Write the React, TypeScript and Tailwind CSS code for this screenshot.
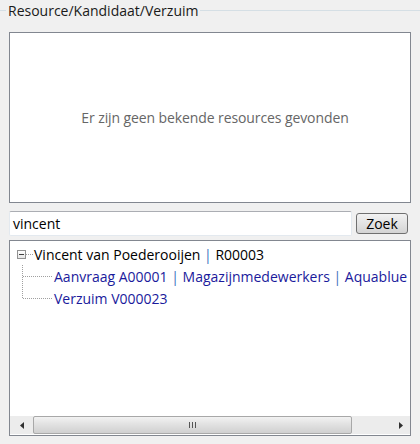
import React from 'react';

const font = { fontFamily: '"Open Sans", "Noto Sans", sans-serif' };

function Connector({ last }: { last?: boolean }) {
  // dotted tree lines drawn for each child row
  return (
    <svg width="44" height="22" className="shrink-0" shapeRendering="crispEdges">
      <line x1="12.5" y1="0" x2="12.5" y2={last ? 11.5 : 22} stroke="#a0a0a0" strokeDasharray="1 1" />
      <line x1="13" y1="11.5" x2="42" y2="11.5" stroke="#a0a0a0" strokeDasharray="1 1" />
    </svg>
  );
}

function Sep() {
  return <span className="text-[#3a70c0]"> | </span>;
}

export default function App() {
  return (
    <div className="w-[420px] h-[444px] bg-[#f0f0f0] flex flex-col px-[9px] overflow-hidden" style={font}>
      {/* group header */}
      <div className="-mx-[9px] h-[21px] flex items-center">
        <div className="w-[6px] h-px bg-[#d5dfe5]" />
        <span className="px-[2px] text-[14px] leading-none text-[#1a1a1a]">Resource/Kandidaat/Verzuim</span>
        <div className="flex-1 h-px bg-[#d5dfe5]" />
      </div>

      <div className="mt-[11px] h-[171px] border border-[#828790] bg-white flex items-center justify-center pl-[10px]">
        <span className="text-[14px] text-[#666] tracking-[-0.1px]">Er zijn geen bekende resources gevonden</span>
      </div>

      <div className="mt-[8px] flex items-center">
        <div className="w-[343px] h-[25px] bg-white border border-[#e3e9ef] border-t-[#abadb3] rounded-[2px] flex items-center px-[3px]">
          <span className="text-[14px] text-black">vincent</span>
        </div>
        <div className="ml-[4px] w-[52px] h-[21px] rounded-[3px] border border-[#707070] bg-gradient-to-b from-[#f2f2f2] to-[#d4d4d4] flex items-center justify-center">
          <span className="text-[14px] text-black leading-none">Zoek</span>
        </div>
      </div>

      <div className="mt-[4px] h-[196px] border border-[#828790] bg-white flex flex-col">
        <div className="flex-1 pt-[2px] text-[14px] whitespace-nowrap overflow-hidden">
          <div className="h-[22px] flex items-center pl-[7px]">
            <div className="w-[9px] h-[9px] border border-[#919191] bg-gradient-to-b from-white to-[#e6e6e6] flex items-center justify-center">
              <div className="w-[5px] h-px bg-[#404040]" />
            </div>
            <div className="w-[7px] border-t border-dotted border-[#a0a0a0]" />
            <span className="ml-[1px] text-black">
              Vincent van Poederooijen<Sep />R00003
            </span>
          </div>
          <div className="h-[22px] flex items-center">
            <Connector />
            <span className="text-[#1a1a9c]">
              Aanvraag A00001<Sep />Magazijnmedewerkers<Sep />Aquablue
            </span>
          </div>
          <div className="h-[22px] flex items-center">
            <Connector last />
            <span className="text-[#1a1a9c]">Verzuim V000023</span>
          </div>
        </div>

        {/* horizontal scrollbar */}
        <div className="h-[18px] mb-[1px] flex bg-[#ececec]">
          <div className="w-[23px] flex items-center justify-center">
            <svg width="4" height="7" viewBox="0 0 4 7"><path d="M4 0 L0 3.5 L4 7 Z" fill="#303030" /></svg>
          </div>
          <div className="w-[319px] rounded-[2px] border border-[#a8a8a8] bg-gradient-to-b from-[#f2f2f2] via-[#e0e0e0] to-[#d0d0d0] flex items-center justify-center">
            <div className="flex gap-[2px]">
              <div className="w-px h-[6px] bg-[#555]" />
              <div className="w-px h-[6px] bg-[#555]" />
              <div className="w-px h-[6px] bg-[#555]" />
            </div>
          </div>
          <div className="flex-1 flex items-center justify-end pr-[7px]">
            <svg width="4" height="7" viewBox="0 0 4 7"><path d="M0 0 L4 3.5 L0 7 Z" fill="#303030" /></svg>
          </div>
        </div>
      </div>
    </div>
  );
}
